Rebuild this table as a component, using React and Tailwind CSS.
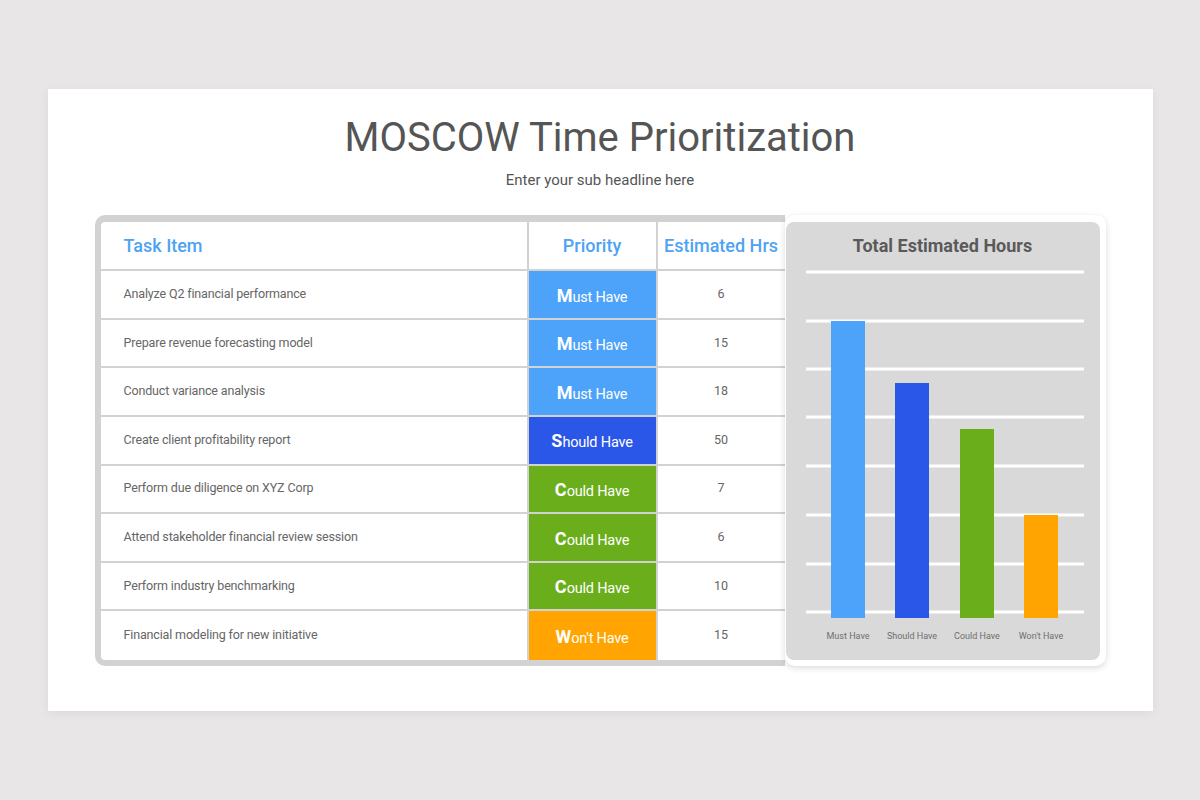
import React from 'react';

const tasks = [
  { name: 'Analyze Q2 financial performance', priority: 'must', hrs: 6 },
  { name: 'Prepare revenue forecasting model', priority: 'must', hrs: 15 },
  { name: 'Conduct variance analysis', priority: 'must', hrs: 18 },
  { name: 'Create client profitability report', priority: 'should', hrs: 50 },
  { name: 'Perform due diligence on XYZ Corp', priority: 'could', hrs: 7 },
  { name: 'Attend stakeholder financial review session', priority: 'could', hrs: 6 },
  { name: 'Perform industry benchmarking', priority: 'could', hrs: 10 },
  { name: 'Financial modeling for new initiative', priority: 'wont', hrs: 15 },
];

const priorities = {
  must: { first: 'M', rest: 'ust Have', bg: 'bg-[#4da3fa]' },
  should: { first: 'S', rest: 'hould Have', bg: 'bg-[#2b57e8]' },
  could: { first: 'C', rest: 'ould Have', bg: 'bg-[#6aae1b]' },
  wont: { first: 'W', rest: "on't Have", bg: 'bg-[#ffa400]' },
};

// bar positions taken from the chart area (x, top)
const bars = [
  { label: 'Must Have', x: 45, top: 51, color: '#4da3fa' },
  { label: 'Should Have', x: 109, top: 113, color: '#2b57e8' },
  { label: 'Could Have', x: 174, top: 159, color: '#6aae1b' },
  { label: "Won't Have", x: 238, top: 245, color: '#ffa400' },
];

const gridLines = [2, 51, 99, 147, 196, 245, 294, 342];

const PriorityCell = ({ priority, last }) => {
  const p = priorities[priority];
  return (
    <div
      className={`flex items-center justify-center border-l-2 border-[#d2d2d2] ${p.bg} ${last ? '' : 'border-b-2'} text-white pt-[3px]`}
    >
      <span className="leading-none">
        <span className="text-[18px] font-bold">{p.first}</span>
        <span className="text-[14.5px] tracking-[-0.2px]">{p.rest}</span>
      </span>
    </div>
  );
};

const App = () => {
  return (
    <div className="h-[800px] w-full bg-[#e8e6e7] flex items-center justify-center font-['Roboto',sans-serif]">
      <div className="w-[1105px] h-[622px] bg-white shadow-[0_2px_10px_rgba(0,0,0,0.06)] px-[47px] pt-[25px]">
        <h1 className="text-center text-[40px] leading-[48px] text-[#555555]">MOSCOW Time Prioritization</h1>
        <p className="text-center text-[15px] leading-[20px] text-[#555555] mt-[8px]">Enter your sub headline here</p>

        <div className="flex mt-[25px]">
          {/* table */}
          <div className="w-[690px] h-[451px] bg-[#d2d2d2] rounded-l-[10px] pl-[6px] pt-[7px] pb-[6px]">
            <div className="bg-white h-[438px] rounded-tl-[4px] rounded-bl-[4px] flex flex-col">
              <div className="grid grid-cols-[426px_129px_129px] h-[49px] border-b-2 border-[#d2d2d2]">
                <div className="flex items-center pl-[23px] text-[18px] font-medium text-[#4ea3f3]">Task Item</div>
                <div className="flex items-center justify-center border-l-2 border-[#d2d2d2] text-[18px] font-medium text-[#4ea3f3]">Priority</div>
                <div className="flex items-center justify-center border-l-2 border-[#d2d2d2] text-[18px] font-medium text-[#4ea3f3]">Estimated Hrs</div>
              </div>
              {tasks.map((t, i) => {
                const last = i === tasks.length - 1;
                return (
                  <div key={i} className="grid grid-cols-[426px_129px_129px] flex-1">
                    <div className={`flex items-center pl-[23px] text-[12.5px] tracking-[-0.15px] text-[#666666] border-[#d2d2d2] ${last ? '' : 'border-b-2'}`}>
                      {t.name}
                    </div>
                    <PriorityCell priority={t.priority} last={last} />
                    <div className={`flex items-center justify-center border-l-2 border-[#d2d2d2] text-[12.5px] text-[#666666] ${last ? '' : 'border-b-2'}`}>
                      {t.hrs}
                    </div>
                  </div>
                );
              })}
            </div>
          </div>

          {/* chart */}
          <div className="w-[321px] h-[451px] bg-white rounded-[10px] shadow-[0_2px_6px_rgba(0,0,0,0.15)] pl-px pt-[7px] pr-[6px] pb-[6px]">
            <div className="h-[438px] bg-[#d9d9d9] rounded-[8px]">
              <div className="h-[46px] flex items-center justify-center text-[18px] font-bold text-[#5a5a5a]">
                Total Estimated Hours
              </div>
              <svg width="314" height="392" viewBox="0 -2 314 392">
                {gridLines.map((y) => (
                  <rect key={y} x="20" y={y - 1.5} width="278" height="3" fill="#ffffff" />
                ))}
                {bars.map((b) => (
                  <g key={b.label}>
                    <rect x={b.x} y={b.top} width="34" height={348 - b.top} fill={b.color} />
                    <text
                      x={b.x + 17}
                      y="369"
                      textAnchor="middle"
                      fontSize="9"
                      fill="#6f6f6f"
                      fontFamily="Roboto, sans-serif"
                    >
                      {b.label}
                    </text>
                  </g>
                ))}
              </svg>
            </div>
          </div>
        </div>
      </div>
    </div>
  );
};

export default App;
